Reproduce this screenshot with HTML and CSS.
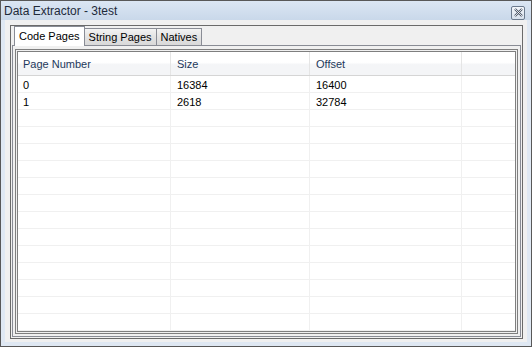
FILE: index.html
```html
<!DOCTYPE html>
<html>
<head>
    <title>Data Extractor - 3test</title>
    <link rel="stylesheet" href="styles.css">
</head>
<body>
    <div class="window">
        <div class="titlebar">
            <span class="title">Data Extractor - 3test</span>
            <span class="close">
                <svg width="9" height="9" viewBox="0 0 9 9">
                    <path d="M1 1 L8 8 M8 1 L1 8" stroke="#4a5566" stroke-width="2.2" fill="none"/>
                    <path d="M1 1 L8 8 M8 1 L1 8" stroke="#ffffff" stroke-width="0.8" fill="none"/>
                </svg>
            </span>
        </div>
        <div class="client">
            <div class="panel">
                <div class="tabs">
                    <div class="tab active">Code Pages</div>
                    <div class="tab">String Pages</div>
                    <div class="tab">Natives</div>
                </div>
                <div class="tabpage">
                    <div class="listview">
                        <div class="listinner">
                            <div class="row header">
                                <div class="cell c1">Page Number</div>
                                <div class="cell c2">Size</div>
                                <div class="cell c3">Offset</div>
                                <div class="cell c4"></div>
                            </div>
                            <div class="row">
                                <div class="cell c1">0</div>
                                <div class="cell c2">16384</div>
                                <div class="cell c3">16400</div>
                                <div class="cell c4"></div>
                            </div>
                            <div class="row">
                                <div class="cell c1">1</div>
                                <div class="cell c2">2618</div>
                                <div class="cell c3">32784</div>
                                <div class="cell c4"></div>
                            </div>
                            <div class="row"><div class="cell c1"></div><div class="cell c2"></div><div class="cell c3"></div><div class="cell c4"></div></div>
                            <div class="row"><div class="cell c1"></div><div class="cell c2"></div><div class="cell c3"></div><div class="cell c4"></div></div>
                            <div class="row"><div class="cell c1"></div><div class="cell c2"></div><div class="cell c3"></div><div class="cell c4"></div></div>
                            <div class="row"><div class="cell c1"></div><div class="cell c2"></div><div class="cell c3"></div><div class="cell c4"></div></div>
                            <div class="row"><div class="cell c1"></div><div class="cell c2"></div><div class="cell c3"></div><div class="cell c4"></div></div>
                            <div class="row"><div class="cell c1"></div><div class="cell c2"></div><div class="cell c3"></div><div class="cell c4"></div></div>
                            <div class="row"><div class="cell c1"></div><div class="cell c2"></div><div class="cell c3"></div><div class="cell c4"></div></div>
                            <div class="row"><div class="cell c1"></div><div class="cell c2"></div><div class="cell c3"></div><div class="cell c4"></div></div>
                            <div class="row"><div class="cell c1"></div><div class="cell c2"></div><div class="cell c3"></div><div class="cell c4"></div></div>
                            <div class="row"><div class="cell c1"></div><div class="cell c2"></div><div class="cell c3"></div><div class="cell c4"></div></div>
                            <div class="row"><div class="cell c1"></div><div class="cell c2"></div><div class="cell c3"></div><div class="cell c4"></div></div>
                            <div class="row"><div class="cell c1"></div><div class="cell c2"></div><div class="cell c3"></div><div class="cell c4"></div></div>
                            <div class="row"><div class="cell c1"></div><div class="cell c2"></div><div class="cell c3"></div><div class="cell c4"></div></div>
                        </div>
                    </div>
                </div>
            </div>
        </div>
    </div>
</body>
</html>
```

FILE: styles.css
```css
body {
    margin: 0;
    font-family: "Liberation Sans", Arial, sans-serif;
    font-size: 11px;
    color: #000;
}

.window {
    width: 532px;
    height: 347px;
    box-sizing: border-box;
    border: 1px solid #585858;
    background-color: #dfe8f3;
    padding: 0 4px 4px 4px;
    display: flex;
    flex-direction: column;
}

.titlebar {
    height: 22px;
    margin: 0 -4px;
    padding: 0 6px 0 3px;
    background: linear-gradient(#dbe6f3, #c9d8ea);
    display: flex;
    align-items: center;
    justify-content: space-between;
}

.title {
    font-size: 12px;
    color: #1e2a3a;
}

.close {
    width: 12px;
    height: 12px;
    margin-top: 4px;
    border: 1px solid #6c7b8e;
    border-radius: 2px;
    background: linear-gradient(#f4f7fb, #d6e0ec);
    display: flex;
    align-items: center;
    justify-content: center;
}

.client {
    flex: 1;
    background-color: #f0f0f0;
    padding: 5px 4px 3px 5px;
    display: flex;
}

.panel {
    flex: 1;
    border: 1px solid #6a6a6a;
    padding: 1px 1px 1px 1px;
    display: flex;
    flex-direction: column;
}

.tabs {
    display: flex;
    align-items: flex-end;
    height: 18px;
    padding-left: 3px;
    position: relative;
    z-index: 1;
}

.tab {
    height: 16px;
    line-height: 16px;
    padding: 0 4px;
    border: 1px solid #898c95;
    border-bottom: none;
    margin-right: -1px;
    background: linear-gradient(#f3f3f3, #e3e3e3 50%, #d9d9d9);
}

.tab.active {
    height: 19px;
    line-height: 18px;
    padding: 0 4px;
    background: #ffffff;
    margin-bottom: -1px;
    margin-left: -1px;
}

.tabpage {
    flex: 1;
    border: 1px solid #898c95;
    padding: 3px 2px 2px 2px;
    display: flex;
}

.listview {
    flex: 1;
    border: 1px solid #7f7f7f;
    padding: 1px;
    display: flex;
}

.listinner {
    flex: 1;
    border: 1px solid #7f7f7f;
    background-color: #ffffff;
    overflow: hidden;
}

.row {
    display: flex;
    height: 17px;
    box-sizing: border-box;
    border-bottom: 1px solid #f0f0f0;
}

.row.header {
    height: 24px;
    background: linear-gradient(#ffffff, #ffffff 45%, #f4f5f7 55%, #f4f5f7);
    border-bottom: 1px solid #d5d5d5;
    color: #1e395b;
}

.cell {
    box-sizing: border-box;
    padding: 1px 0 0 5px;
    border-right: 1px solid #f0f0f0;
    display: flex;
    align-items: center;
}

.header .cell {
    border-right: 1px solid #e5e5e5;
}

.c1 {
    width: 153px;
}

.c2 {
    width: 139px;
    padding-left: 6px;
}

.c3 {
    width: 152px;
    padding-left: 6px;
}

.c4 {
    flex: 1;
    border-right: none;
}

.header .c4 {
    border-right: none;
}
```
